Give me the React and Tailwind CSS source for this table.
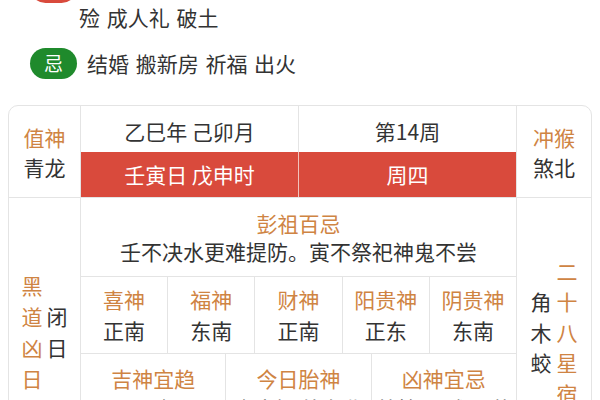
export default function App() {
  const font = { fontFamily: '"Noto Sans CJK SC", "Noto Sans", sans-serif' };
  const orange = "text-[#cf8443]";
  const dark = "text-[#333333]";
  const five = [
    ["喜神", "正南"],
    ["福神", "东南"],
    ["财神", "正南"],
    ["阳贵神", "正东"],
    ["阴贵神", "东南"],
  ];
  const three = [
    ["吉神宜趋", "天恩 母仓 天愿", "六合 五富 圣心"],
    ["今日胎神", "仓库栖 外东北", ""],
    ["凶神宜忌", "劫煞 天贼 五墓", "闭日 土符"],
  ];
  return (
    <div className="w-[600px] h-[400px] overflow-hidden bg-white" style={font}>
      <div className="-mt-[28px]">
        <div className="flex items-center pl-[30px] h-[31px]">
          <div className="w-[47px] h-[31px] rounded-full bg-[#d94a3c] text-white text-[19px] flex items-center justify-center">宜</div>
          <div className={`ml-[10px] text-[21px] [word-spacing:2px] ${dark}`}>祭祀 祈福 求嗣 开光 出行 解除 入</div>
        </div>
        <div className={`pl-[79px] h-[28px] leading-[28px] text-[21px] [word-spacing:2px] ${dark}`}>殓 成人礼 破土</div>
        <div className="flex items-center pl-[30px] h-[31px] mt-[17px]">
          <div className="w-[47px] h-[31px] rounded-full bg-[#1f8a2c] text-white text-[19px] flex items-center justify-center">忌</div>
          <div className={`ml-[10px] text-[21px] [word-spacing:2px] ${dark}`}>结婚 搬新房 祈福 出火</div>
        </div>
      </div>

      <div className="mx-[8px] mt-[26px] border border-[#e4e4e4] rounded-t-[10px] overflow-hidden">
        {/* Row 1 */}
        <div className="flex h-[92px] border-b border-[#e4e4e4]">
          <div className="w-[72px] border-r border-[#e4e4e4] flex flex-col items-center justify-center text-[21px] leading-[30px]">
            <div className={orange}>值神</div>
            <div className={dark}>青龙</div>
          </div>
          <div className="w-[436px] border-r border-[#e4e4e4] flex flex-col">
            <div className={`flex h-[46px] text-[21px] ${dark}`}>
              <div className="flex-1 border-r border-[#e4e4e4] flex items-center justify-center pt-[6px]">乙巳年 己卯月</div>
              <div className="flex-1 flex items-center justify-center pt-[6px]">第14周</div>
            </div>
            <div className="flex h-[46px] bg-[#d94a3c] text-white text-[21px]">
              <div className="flex-1 border-r border-[#f2c2bb] flex items-center justify-center">壬寅日 戊申时</div>
              <div className="flex-1 flex items-center justify-center">周四</div>
            </div>
          </div>
          <div className="flex-1 flex flex-col items-center justify-center text-[21px] leading-[30px]">
            <div className={orange}>冲猴</div>
            <div className={dark}>煞北</div>
          </div>
        </div>

        {/* Row 2 */}
        <div className="flex">
          <div className="w-[72px] border-r border-[#e4e4e4] flex items-center justify-center gap-[4px] text-[21px] leading-[31px]">
            <div className={`flex flex-col items-center ${orange}`}>
              <span>黑</span><span>道</span><span>凶</span><span>日</span>
            </div>
            <div className={`flex flex-col items-center ${dark}`}>
              <span>闭</span><span>日</span>
            </div>
          </div>
          <div className="w-[436px] border-r border-[#e4e4e4] flex flex-col">
            <div className="h-[79px] border-b border-[#e4e4e4] flex flex-col items-center justify-center text-[21px] leading-[28px]">
              <div className={orange}>彭祖百忌</div>
              <div className={dark}>壬不决水更难提防。寅不祭祀神鬼不尝</div>
            </div>
            <div className="flex h-[77px] border-b border-[#e4e4e4]">
              {five.map(([a, b], i) => (
                <div key={i} className={`flex-1 flex flex-col items-center justify-center text-[21px] leading-[31px] ${i < 4 ? "border-r border-[#e4e4e4]" : ""}`}>
                  <div className={orange}>{a}</div>
                  <div className={dark}>{b}</div>
                </div>
              ))}
            </div>
            <div className="flex h-[112px]">
              {three.map(([a, b, c], i) => (
                <div key={i} className={`flex-1 flex flex-col items-center pt-[9px] text-[21px] leading-[30px] ${i < 2 ? "border-r border-[#e4e4e4]" : ""}`}>
                  <div className={orange}>{a}</div>
                  <div className={dark}>{b}</div>
                  <div className={dark}>{c}</div>
                </div>
              ))}
            </div>
          </div>
          <div className="flex-1 flex items-center justify-center gap-[5px] text-[21px] leading-[30.5px]">
            <div className={`flex flex-col items-center ${dark}`}>
              <span>角</span><span>木</span><span>蛟</span>
            </div>
            <div className={`flex flex-col items-center ${orange}`}>
              <span>二</span><span>十</span><span>八</span><span>星</span><span>宿</span>
            </div>
          </div>
        </div>
      </div>
    </div>
  );
}
